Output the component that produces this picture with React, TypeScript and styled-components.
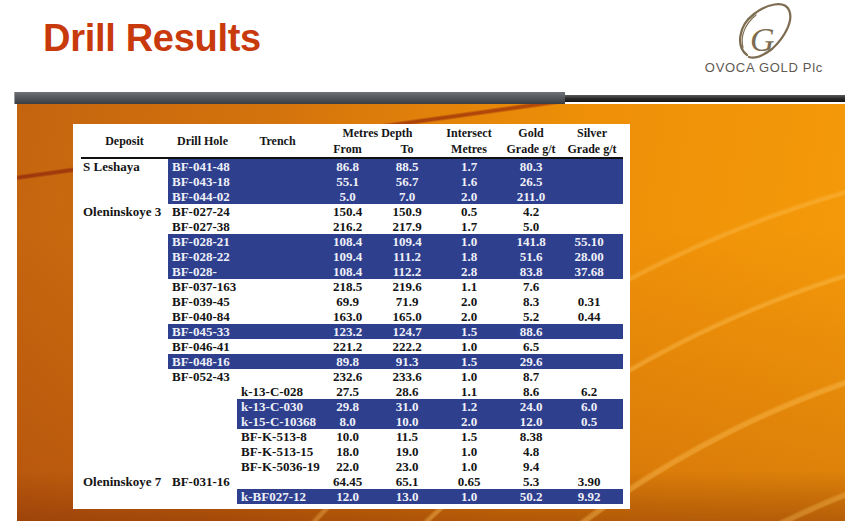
import React from "react";
import styled, { createGlobalStyle } from "styled-components";

type DrillRow = {
    deposit?: string;
    hole?: string;
    trench?: string;
    from: string;
    to: string;
    metres: string;
    gold: string;
    silver?: string;
    band?: number;
};

const rows: Array<DrillRow> = [
    { deposit: "S Leshaya", hole: "BF-041-48", from: "86.8", to: "88.5", metres: "1.7", gold: "80.3", band: 2 },
    { hole: "BF-043-18", from: "55.1", to: "56.7", metres: "1.6", gold: "26.5", band: 2 },
    { hole: "BF-044-02", from: "5.0", to: "7.0", metres: "2.0", gold: "211.0", band: 2 },
    { deposit: "Oleninskoye 3", hole: "BF-027-24", from: "150.4", to: "150.9", metres: "0.5", gold: "4.2" },
    { hole: "BF-027-38", from: "216.2", to: "217.9", metres: "1.7", gold: "5.0" },
    { hole: "BF-028-21", from: "108.4", to: "109.4", metres: "1.0", gold: "141.8", silver: "55.10", band: 2 },
    { hole: "BF-028-22", from: "109.4", to: "111.2", metres: "1.8", gold: "51.6", silver: "28.00", band: 2 },
    { hole: "BF-028-", from: "108.4", to: "112.2", metres: "2.8", gold: "83.8", silver: "37.68", band: 2 },
    { hole: "BF-037-163", from: "218.5", to: "219.6", metres: "1.1", gold: "7.6" },
    { hole: "BF-039-45", from: "69.9", to: "71.9", metres: "2.0", gold: "8.3", silver: "0.31" },
    { hole: "BF-040-84", from: "163.0", to: "165.0", metres: "2.0", gold: "5.2", silver: "0.44" },
    { hole: "BF-045-33", from: "123.2", to: "124.7", metres: "1.5", gold: "88.6", band: 2 },
    { hole: "BF-046-41", from: "221.2", to: "222.2", metres: "1.0", gold: "6.5" },
    { hole: "BF-048-16", from: "89.8", to: "91.3", metres: "1.5", gold: "29.6", band: 2 },
    { hole: "BF-052-43", from: "232.6", to: "233.6", metres: "1.0", gold: "8.7" },
    { trench: "k-13-C-028", from: "27.5", to: "28.6", metres: "1.1", gold: "8.6", silver: "6.2" },
    { trench: "k-13-C-030", from: "29.8", to: "31.0", metres: "1.2", gold: "24.0", silver: "6.0", band: 3 },
    { trench: "k-15-C-10368", from: "8.0", to: "10.0", metres: "2.0", gold: "12.0", silver: "0.5", band: 3 },
    { trench: "BF-K-513-8", from: "10.0", to: "11.5", metres: "1.5", gold: "8.38" },
    { trench: "BF-K-513-15", from: "18.0", to: "19.0", metres: "1.0", gold: "4.8" },
    { trench: "BF-K-5036-19", from: "22.0", to: "23.0", metres: "1.0", gold: "9.4" },
    { deposit: "Oleninskoye 7", hole: "BF-031-16", from: "64.45", to: "65.1", metres: "0.65", gold: "5.3", silver: "3.90" },
    { trench: "k-BF027-12", from: "12.0", to: "13.0", metres: "1.0", gold: "50.2", silver: "9.92", band: 3 },
];

const COLUMNS = "87px 69px 81px 59px 60px 64px 60px 62px";

const LogoMark = () => (
    <svg width="60" height="58" viewBox="0 0 60 58">
        <path
            d="M13 53 C2 45, 4 24, 20 12 C33 2, 50 -2, 55 8 C60 19, 50 36, 38 47 C30 53, 21 57, 15 55"
            fill="none"
            stroke="#7d6c50"
            strokeWidth="2.2"
            strokeLinecap="round"
        />
        <path
            d="M9 46 C6 34, 11 22, 22 13"
            fill="none"
            stroke="#7d6c50"
            strokeWidth="1.2"
            strokeLinecap="round"
        />
        <text
            x="16"
            y="49"
            fontFamily="'Liberation Serif', serif"
            fontStyle="italic"
            fontSize="34"
            fill="#7d6c50"
        >
            G
        </text>
    </svg>
);

const App = () => {
    return (
        <>
            <GlobalStyle />
            <Page>
                <Header>
                    <Title>Drill Results</Title>
                    <Logo>
                        <LogoMark />
                        <LogoText>OVOCA GOLD Plc</LogoText>
                    </Logo>
                </Header>
                <Divider>
                    <DividerBar />
                    <DividerLine />
                </Divider>
                <Panel>
                    <Card>
                        <HeadGrid>
                            <HeadCell $col={1} $row="1 / span 2">Deposit</HeadCell>
                            <HeadCell $col={2} $row="1 / span 2">Drill Hole</HeadCell>
                            <HeadCell $col={3} $row="1 / span 2">Trench</HeadCell>
                            <HeadCell $col={4} $span={2} $row="1">Metres Depth</HeadCell>
                            <HeadCell $col={6} $row="1">Intersect</HeadCell>
                            <HeadCell $col={7} $row="1">Gold</HeadCell>
                            <HeadCell $col={8} $row="1">Silver</HeadCell>
                            <HeadCell $col={4} $row="2">From</HeadCell>
                            <HeadCell $col={5} $row="2">To</HeadCell>
                            <HeadCell $col={6} $row="2">Metres</HeadCell>
                            <HeadCell $col={7} $row="2">Grade g/t</HeadCell>
                            <HeadCell $col={8} $row="2">Grade g/t</HeadCell>
                        </HeadGrid>
                        {rows.map((row, index) => {
                            const values = [
                                row.deposit,
                                row.hole,
                                row.trench,
                                row.from,
                                row.to,
                                row.metres,
                                row.gold,
                                row.silver,
                            ];
                            return (
                                <BodyRow key={index}>
                                    {values.map((value, i) => (
                                        <Cell
                                            key={i}
                                            $blue={!!row.band && i + 1 >= row.band}
                                            $index={i}
                                        >
                                            {value ?? ""}
                                        </Cell>
                                    ))}
                                </BodyRow>
                            );
                        })}
                    </Card>
                </Panel>
            </Page>
        </>
    );
};

export default App;

const GlobalStyle = createGlobalStyle`
    html, body {
        margin: 0;
        padding: 0;
        background: #ffffff;
    }
    body {
        font-family: "Liberation Sans", Arial, sans-serif;
    }
`;

const Page = styled.div`
    width: 853px;
    height: 521px;
    overflow: hidden;
    background: #ffffff;
`;

const Header = styled.div`
    height: 92px;
    display: flex;
    justify-content: space-between;
    align-items: flex-start;
`;

const Title = styled.h1`
    margin: 19px 0 0 43px;
    font-family: "Liberation Sans", Arial, sans-serif;
    font-size: 38px;
    line-height: 38px;
    font-weight: 700;
    color: #c8390c;
    letter-spacing: -0.3px;
`;

const Logo = styled.div`
    display: flex;
    flex-direction: column;
    align-items: center;
    margin: 2px 30px 0 0;
`;

const LogoText = styled.div`
    margin-top: 2px;
    font-family: "Liberation Sans", Arial, sans-serif;
    font-size: 13px;
    line-height: 12px;
    letter-spacing: 0.7px;
    color: #5f5a52;
`;

const Divider = styled.div`
    display: flex;
    align-items: center;
    height: 12px;
    padding-left: 14px;
`;

const DividerBar = styled.div`
    width: 551px;
    height: 12px;
    box-sizing: border-box;
    border-left: 1px solid #9a9da2;
    background: linear-gradient(to bottom, #707378 0%, #55585d 45%, #3b3e43 100%);
`;

const DividerLine = styled.div`
    width: 280px;
    height: 7px;
    background: linear-gradient(to bottom, #5a5a5a 0%, #2a2a2a 50%, #121212 100%);
`;

const Panel = styled.div`
    margin-left: 17px;
    width: 828px;
    height: 417px;
    box-sizing: border-box;
    padding: 20px 0 0 56px;
    background:
        radial-gradient(circle at 1150px 1200px, transparent 1154px, rgba(255, 196, 90, 0.35) 1156px, rgba(255, 196, 90, 0.35) 1158px, transparent 1161px),
        radial-gradient(circle at 1150px 1200px, transparent 1074px, rgba(255, 196, 90, 0.4) 1076px, rgba(255, 196, 90, 0.4) 1078px, transparent 1081px),
        radial-gradient(circle at 1150px 1200px, transparent 972px, rgba(255, 196, 90, 0.4) 974px, rgba(255, 196, 90, 0.4) 977px, transparent 980px),
        radial-gradient(circle at 1150px 1200px, transparent 867px, rgba(255, 196, 90, 0.35) 869px, rgba(255, 196, 90, 0.35) 872px, transparent 875px),
        linear-gradient(172deg, transparent 0px, transparent 70px, rgba(130, 20, 10, 0.55) 72px, rgba(130, 20, 10, 0.55) 74px, transparent 76px),
        linear-gradient(to bottom, rgba(0, 0, 0, 0) 0%, rgba(0, 0, 0, 0) 88%, rgba(110, 35, 5, 0.35) 100%),
        linear-gradient(to bottom, rgba(120, 20, 10, 0) 30%, rgba(120, 20, 10, 0.22) 100%),
        linear-gradient(100deg, #c4640f 0%, #d4740c 30%, #ee8f08 62%, #f59b0a 100%);
`;

const Card = styled.div`
    width: 557px;
    height: 385px;
    box-sizing: border-box;
    padding: 1px 7px 0 8px;
    background: #ffffff;
`;

const HeadGrid = styled.div`
    display: grid;
    grid-template-columns: ${COLUMNS};
    grid-template-rows: 16px 16px;
    border-bottom: 2px solid #111111;
`;

interface HeadCellProps {
    $col: number;
    $row: string;
    $span?: number;
}

const HeadCell = styled.div<HeadCellProps>`
    grid-column: ${(p) => p.$col} / span ${(p) => p.$span ?? 1};
    grid-row: ${(p) => p.$row};
    display: flex;
    align-items: center;
    justify-content: center;
    font-family: "Liberation Serif", "Times New Roman", serif;
    font-weight: 700;
    font-size: 12px;
    color: #151515;
    white-space: nowrap;
`;

const BodyRow = styled.div`
    display: grid;
    grid-template-columns: ${COLUMNS};
    height: 15px;
`;

interface CellProps {
    $blue: boolean;
    $index: number;
}

const Cell = styled.div<CellProps>`
    height: 15px;
    line-height: 15px;
    box-sizing: border-box;
    white-space: nowrap;
    font-family: "Liberation Serif", "Times New Roman", serif;
    font-weight: 700;
    font-size: 13px;
    text-align: ${(p) => (p.$index < 3 ? "left" : "center")};
    padding-left: ${(p) => (p.$index === 0 ? "2px" : p.$index < 3 ? "4px" : "0")};
    padding-right: ${(p) => (p.$index === 7 ? "6px" : "0")};
    background: ${(p) => (p.$blue ? "#2e3f8e" : "transparent")};
    color: ${(p) => (p.$blue ? "#eef0f8" : "#141414")};
`;
